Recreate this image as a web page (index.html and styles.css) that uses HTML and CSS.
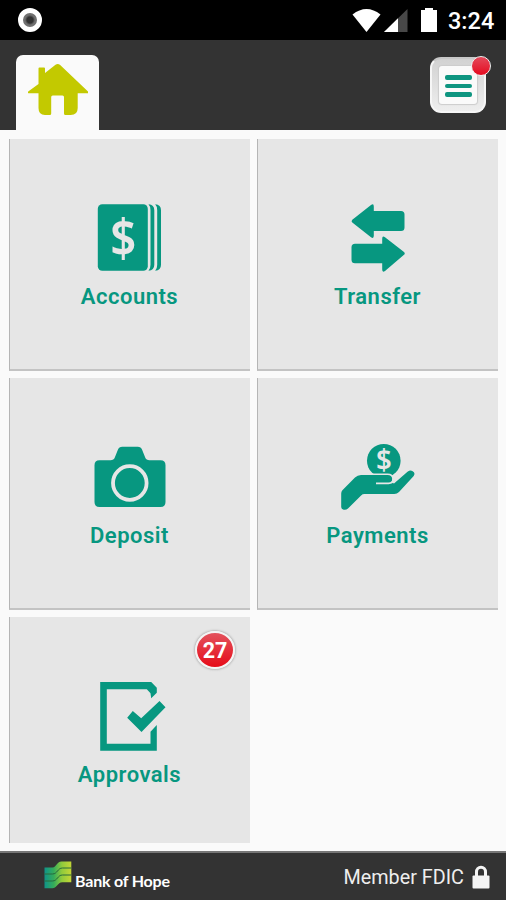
FILE: index.html
```html
<!DOCTYPE html>
<html lang="en">
<head>
  <meta charset="UTF-8">
  <meta name="viewport" content="width=device-width, initial-scale=1.0">
  <title>Bank of Hope</title>
  <link rel="stylesheet" href="styles.css">
</head>
<body>
  <div class="status-bar">
    <span class="record-dot"></span>
    <svg class="status-icons" width="90" height="28" viewBox="0 0 90 28">
      <path d="M1.500 8.500Q15.500-2.500 29.500 8.500L15.500 26Z" fill="#fff"/>
      <path d="M33 26 56.500 3V26Z" fill="#484848"/>
      <path d="M33 26 47 12.300V26Z" fill="#fff"/>
      <path d="M70 4h4V2h8v2h4v22H70Z" fill="#fff"/>
    </svg>
    <span class="clock">3:24</span>
  </div>

  <header class="header">
    <div class="home-tab">
      <svg width="60" height="54" viewBox="0 0 60 54" fill="#c3c900">
        <path d="M10.500 20V4.500q0-1 1-1h4.500q1 0 1 1V9L27.500.800q2.200-1.500 4.400 0L60 27.500q1 1.800-.800 1.800H49.700V44q0 7-7 7H37.500q-1.500 0-1.500-1.500V33q0-1.500-1.500-1.500H24.700q-1.500 0-1.500 1.500v16.500q0 1.500-1.500 1.500H17q-6.500 0-6.500-7V29.300H1q-1.800 0-.800-1.800Z"/>
      </svg>
    </div>
    <button class="menu-btn">
      <span class="menu-face">
        <span class="line"></span>
        <span class="line"></span>
        <span class="line"></span>
      </span>
      <span class="alert-dot"></span>
    </button>
  </header>

  <main class="tiles">
    <div class="tile">
      <svg class="icon" width="80" height="72" viewBox="0 0 80 72">
        <rect x="8.800" y="2.300" width="50" height="66.500" rx="4.500"/>
        <path d="M59.500 2.300q5.800.500 5.800 6v54.500q0 5.500-5.800 6 2-2 2-6V8.300q0-4-2-6Z"/>
        <path d="M66.200 2.300q5.800.500 5.800 6v54.500q0 5.500-5.800 6 2-2 2-6V8.300q0-4-2-6Z"/>
        <text class="dollar" transform="translate(34.300 54.500) scale(.86 1)">$</text>
      </svg>
      <span class="label">Accounts</span>
    </div>
    <div class="tile">
      <svg class="icon" width="80" height="72" viewBox="0 0 80 72">
        <path d="M15.300 17.800 34 3q2.800-1.800 2.800 1.500V9H64q3.500 0 3.500 3.500v13q0 3.500-3.500 3.500H36.800v4.800q0 3.300-2.800 1.500L15.300 20.500q-1.500-1.300 0-2.700Z"/>
        <path d="M67 50 48 35.200q-2.800-1.800-2.800 1.500v5H18q-3.500 0-3.500 3.500v12.500q0 3.500 3.500 3.500h27.200v6.300q0 3.300 2.800 1.500L67 52.700q1.500-1.300 0-2.700Z"/>
      </svg>
      <span class="label">Transfer</span>
    </div>
    <div class="tile">
      <svg class="icon" width="80" height="72" viewBox="0 0 80 72">
        <path d="M10.500 19.300h11q3.300 0 4.300-2.800l3-7.500q1.200-3.300 4.500-3.300h15.400q3.300 0 4.500 3.300l3 7.500q1 2.800 4.300 2.800h11q5 0 5 5V61q0 5-5 5h-61q-5 0-5-5V24.300q0-5 5-5Z"/>
        <circle class="ring" cx="40.800" cy="42" r="16.800"/>
      </svg>
      <span class="label">Deposit</span>
    </div>
    <div class="tile">
      <svg class="icon" width="80" height="72" viewBox="0 0 80 72">
        <circle cx="46.800" cy="19.700" r="16.800"/>
        <text class="dollar small" transform="translate(46.800 28.800) scale(.95 1)">$</text>
        <path class="hand" d="M4.200 52.500q0-2 1.200-3.200L18 36.500q2.500-2.500 6-2.500h26.500q4.500 0 4.700 4 0 2-.700 3.300l2.500 1.200L70.500 30.800q2.600-2 4.800-.900 3.500 2 1.400 5L62 51q-2 2-4.700 2H27.500q-2 0-3.400 1.400L11 67.400q-2.200 2-5 1-1.800-.700-1.800-2.400Z"/>
        <path class="thumb" d="M39 42.300h12.500q4.700 0 4.700-4.300"/>
      </svg>
      <span class="label">Payments</span>
    </div>
    <div class="tile">
      <svg class="icon" width="80" height="72" viewBox="0 0 80 72">
        <path d="M11.200 2h51l5.600 5.700v5l-5.600 5.600-.700-5-3.700-4h-40v54.400h43.700v-12l6.300-6.700v25.700H11.200Z"/>
        <path d="M38.200 37.700 43.800 31l8.400 7.300L70.500 21l6 6.300L52.500 52Z"/>
      </svg>
      <span class="label">Approvals</span>
      <span class="badge">27</span>
    </div>
  </main>

  <footer class="footer">
    <div class="brand">
      <svg width="28" height="30" viewBox="0 0 28 30">
        <defs>
          <linearGradient id="leaf">
            <stop offset="0" stop-color="#10948a"/>
            <stop offset=".35" stop-color="#35ac59"/>
            <stop offset=".65" stop-color="#91cb3c"/>
            <stop offset="1" stop-color="#c4d636"/>
          </linearGradient>
        </defs>
        <g fill="url(#leaf)">
          <path d="M.500 7.500h8c4 0 4-6 9-6h9.800V8h-9c-5 0-5 6-10 6H.500Z"/>
          <path d="M.500 14h8c4 0 4-6 9-6h9.800v7h-9c-5 0-5 6-10 6H.500Z"/>
          <path d="M.500 21h8c4 0 4-6 9-6h9.800v7.300h-9c-5 0-5 6-10 6H.500Z"/>
        </g>
        <path class="folds" d="M.500 14h8c5 0 5-6 10-6h8.800M.500 21h8c5 0 5-6 10-6h8.800"/>
      </svg>
      <span class="brand-name">Bank of Hope</span>
    </div>
    <div class="fdic">
      <span>Member FDIC</span>
      <svg width="18" height="24" viewBox="0 0 18 24">
        <path d="M4.500 12V7a4.500 4.800 0 0 1 9 0v5" fill="none" stroke="#f4f4f4" stroke-width="3"/>
        <rect x=".500" y="10.500" width="17" height="13" rx="1" fill="#f4f4f4"/>
      </svg>
    </div>
  </footer>
</body>
</html>
```

FILE: styles.css
```css
* {
  box-sizing: border-box;
}
body {
  margin: 0;
  height: 900px;
  display: flex;
  flex-direction: column;
  background: #fafafa;
  font-family: Roboto, 'Liberation Sans', sans-serif;
  overflow: hidden;
}
.status-bar {
  height: 40px;
  flex: none;
  display: flex;
  align-items: center;
  background: #000;
  padding: 0 12px 0 18px;
}
.record-dot {
  width: 24px;
  height: 24px;
  border-radius: 50%;
  border: 5px solid #fff;
  background: radial-gradient(circle, #333 0 3px, #707070 5px);
}
.status-icons {
  margin-left: auto;
  margin-right: 6px;
  position: relative;
  left: -1px;
}
.clock {
  width: 46px;
  padding-top: 2px;
  color: #fff;
  font-size: 23.5px;
  font-weight: 500;
  line-height: 28px;
  white-space: nowrap;
}
.header {
  height: 90px;
  flex: none;
  display: flex;
  justify-content: space-between;
  align-items: flex-end;
  background: #333;
  padding: 0 20px 0 16px;
}
.home-tab {
  width: 83px;
  height: 75px;
  padding: 9px 0 0 12px;
  background: #fafafa;
  border-radius: 7px 7px 0 0;
}
.menu-btn {
  position: relative;
  width: 56px;
  height: 56px;
  margin-bottom: 17px;
  padding: 7px;
  border: 2px solid #f6f6f6;
  border-top-color: #c8c8c8;
  border-radius: 11px;
  background: linear-gradient(#d2d2d2, #eee);
}
.menu-face {
  display: flex;
  flex-direction: column;
  align-items: center;
  justify-content: center;
  gap: 4px;
  height: 38px;
  padding-top: 2px;
  background: #fafafa;
  border-radius: 3px;
  box-shadow: 0 0 1px 1px #ccc;
}
.line {
  width: 27px;
  height: 4.5px;
  border-radius: 2px;
  background: #0e9580;
}
.alert-dot {
  position: absolute;
  top: -3px;
  right: -7px;
  width: 20px;
  height: 20px;
  border: 1.5px solid #eee;
  border-radius: 50%;
  background: linear-gradient(#e4495a, #e50b20);
}
.tiles {
  flex: 1;
  display: grid;
  grid-template-columns: 241px 241px;
  grid-template-rows: 232px 232px 226px;
  gap: 7px;
  padding: 9px 8px 0 9px;
}
.tile {
  position: relative;
  display: flex;
  flex-direction: column;
  align-items: center;
  padding: 63px 1px 0 0;
  background: #e6e6e6;
  border-left: 1px solid #b5b5b5;
  border-bottom: 2px solid #c3c3c3;
}
.tile:last-child {
  border-bottom: none;
}
.icon {
  fill: #079780;
  margin-right: 1px;
  overflow: visible;
}
.label {
  margin-top: 9px;
  color: #079780;
  font-size: 22px;
  font-weight: 600;
  letter-spacing: 0.5px;
  line-height: 27px;
}
.dollar {
  fill: #e6e6e6;
  font-family: 'Noto Sans', sans-serif;
  font-size: 53px;
  font-weight: 600;
  text-anchor: middle;
}
.dollar.small {
  font-size: 29px;
}
.ring {
  fill: none;
  stroke: #e6e6e6;
  stroke-width: 3.8;
}
.hand {
  stroke: #e6e6e6;
  stroke-width: 3;
  paint-order: stroke;
}
.thumb {
  fill: none;
  stroke: #e6e6e6;
  stroke-width: 1.8;
}
.badge {
  position: absolute;
  top: 14px;
  right: 15px;
  width: 40px;
  height: 38px;
  border: 2px solid #f4f4f4;
  border-radius: 50%;
  background: linear-gradient(#e3525d, #e60b18);
  box-shadow: 0 0 2px 1px #bbb;
  color: #fff;
  font-size: 21.5px;
  font-weight: 700;
  line-height: 36px;
  text-align: center;
}
.footer {
  height: 49px;
  flex: none;
  display: flex;
  justify-content: space-between;
  align-items: center;
  background: #333;
  border-top: 2px solid #777;
  padding: 0 16px 0 44px;
}
.brand {
  display: flex;
  align-items: center;
  margin-bottom: 4px;
}
.folds {
  fill: none;
  stroke: #286b3c;
  stroke-width: 1;
}
.brand-name {
  margin: 12px 0 0 3px;
  color: #fff;
  font-family: Lato, sans-serif;
  font-size: 16px;
  font-weight: 700;
  letter-spacing: -0.2px;
  line-height: 18px;
  white-space: nowrap;
}
.fdic {
  display: flex;
  align-items: center;
  gap: 8px;
  padding-top: 1px;
  color: #eee;
  font-size: 19.8px;
}
```
